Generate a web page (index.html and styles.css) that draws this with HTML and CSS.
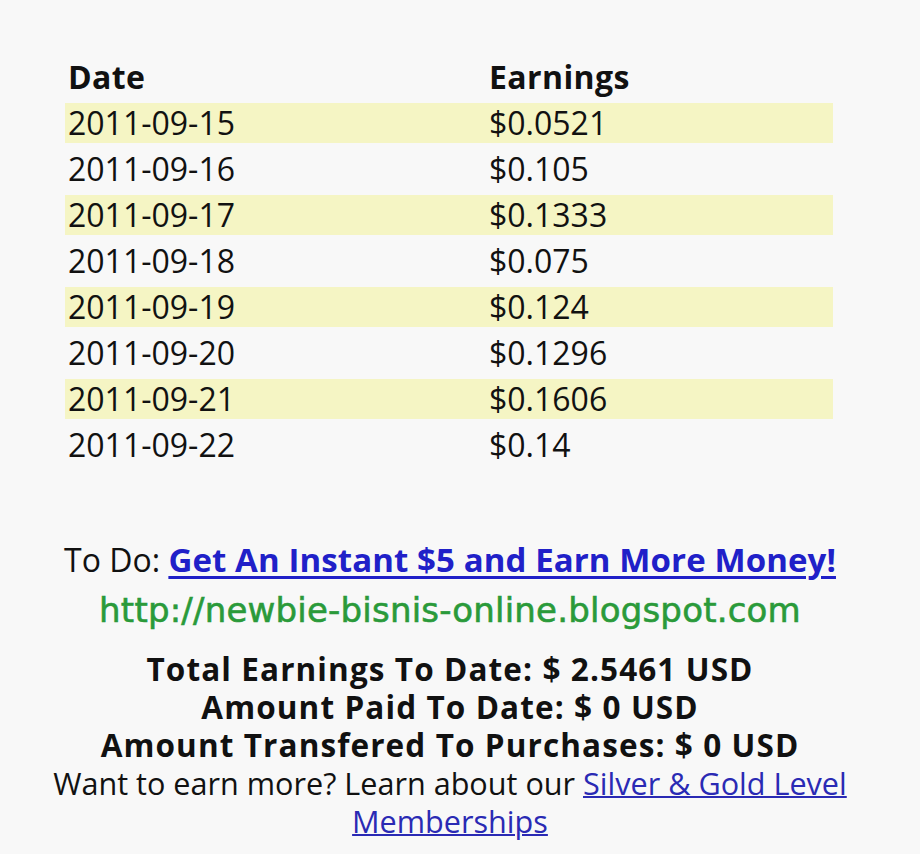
FILE: index.html
```html
<!DOCTYPE html>
<html>
<head>
<meta charset="utf-8">
<link rel="stylesheet" href="styles.css">
</head>
<body>
<div class="page">
  <table class="earnings">
    <thead>
      <tr><th class="c1">Date</th><th class="c2">Earnings</th></tr>
    </thead>
    <tbody>
      <tr class="hl"><td>2011-09-15</td><td>$0.0521</td></tr>
      <tr><td>2011-09-16</td><td>$0.105</td></tr>
      <tr class="hl"><td>2011-09-17</td><td>$0.1333</td></tr>
      <tr><td>2011-09-18</td><td>$0.075</td></tr>
      <tr class="hl"><td>2011-09-19</td><td>$0.124</td></tr>
      <tr><td>2011-09-20</td><td>$0.1296</td></tr>
      <tr class="hl"><td>2011-09-21</td><td>$0.1606</td></tr>
      <tr><td>2011-09-22</td><td>$0.14</td></tr>
    </tbody>
  </table>

  <p class="todo">To Do: <a class="instant" href="#">Get An Instant $5 and Earn More Money!</a></p>
  <p class="url">http://newbie-bisnis-online.blogspot.com</p>

  <div class="totals">
    <p class="total">Total Earnings To Date: $ 2.5461 USD</p>
    <p class="total">Amount Paid To Date: $ 0 USD</p>
    <p class="total">Amount Transfered To Purchases: $ 0 USD</p>
    <p class="more">Want to earn more? Learn about our <a class="member" href="#">Silver &amp; Gold Level<br>Memberships</a></p>
  </div>
</div>
</body>
</html>
```

FILE: styles.css
```css
html, body {
  margin: 0;
  padding: 0;
  background: #f8f8f8;
}

.page {
  width: 900px;
  font-family: "Open Sans", "DejaVu Sans", sans-serif;
  color: #111;
  text-align: center;
}

.earnings {
  margin: 51px 0 0 65px;
  width: 768px;
  border-collapse: separate;
  border-spacing: 0 6px;
  text-align: left;
}

.earnings th,
.earnings td {
  height: 40px;
  padding: 0 0 0 3px;
  vertical-align: middle;
  line-height: 40px;
}

.earnings th {
  font-size: 32px;
  font-weight: bold;
  letter-spacing: 0.4px;
}

.earnings td {
  font-size: 32px;
}

.earnings .c1 {
  width: 418px;
}

.earnings tr.hl td {
  background: #f5f5c4;
}

p {
  margin: 0;
}

.todo {
  margin-top: 69px;
  font-size: 32px;
  line-height: 40px;
}

.instant {
  color: #2020c8;
  font-weight: bold;
  font-size: 33px;
  letter-spacing: 0.1px;
  text-decoration-thickness: 3px;
  text-underline-offset: 4px;
}

.url {
  margin-top: 10px;
  font-family: "DejaVu Sans", sans-serif;
  font-size: 34px;
  letter-spacing: 0.2px;
  line-height: 40px;
  color: #2a9a3a;
  -webkit-text-stroke: 0.6px #2a9a3a;
}

.totals {
  margin-top: 20px;
  font-size: 31px;
  line-height: 38px;
}

.total {
  font-weight: bold;
  font-size: 31.5px;
  letter-spacing: 1.1px;
}

.more {
  font-size: 30.6px;
}

.member {
  color: #2a2ab4;
  text-decoration-thickness: 2px;
}
```
